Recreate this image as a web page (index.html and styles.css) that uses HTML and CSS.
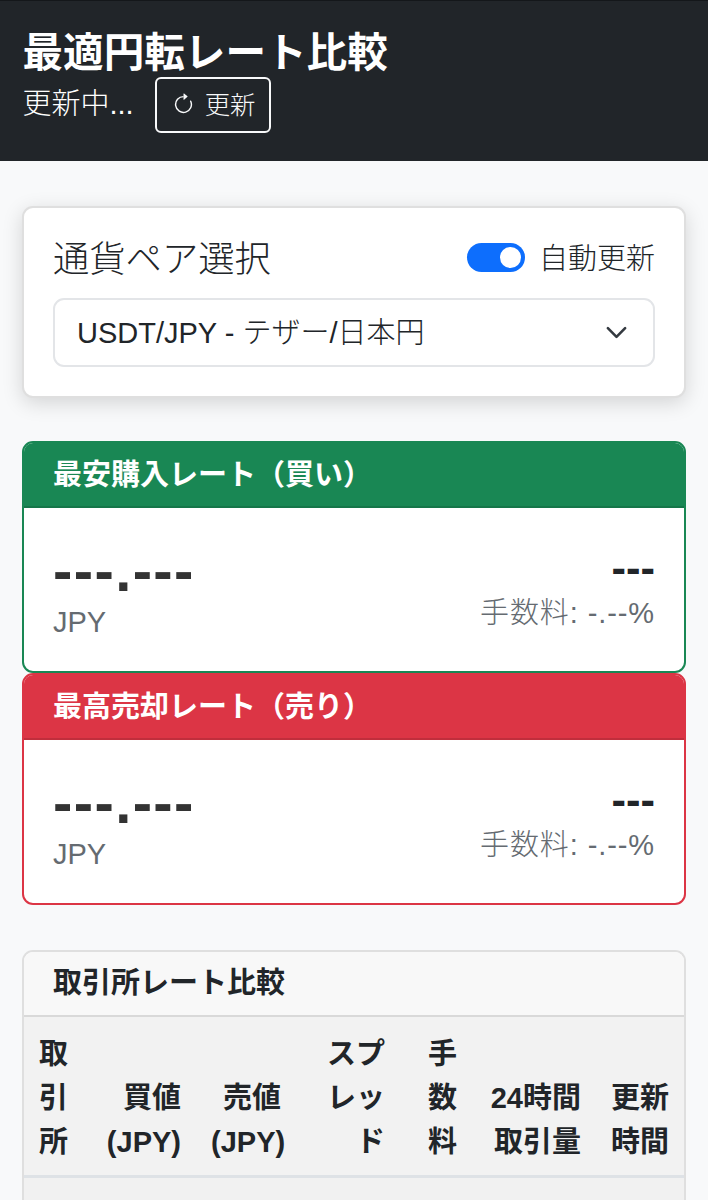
FILE: index.html
```html
<!DOCTYPE html>
<html lang="ja">
<head>
<meta charset="utf-8">
<title>最適円転レート比較</title>
<link rel="stylesheet" href="styles.css">
</head>
<body>
<header class="topbar">
  <h1 class="title">最適円転レート比較</h1>
  <div class="status-row">
    <span class="status">更新中...</span>
    <button class="refresh" type="button">
      <svg class="refresh-icon" viewBox="0 0 16 16" fill="currentColor"><path fill-rule="evenodd" d="M8 3a5 5 0 1 0 4.546 2.914.5.5 0 0 1 .908-.417A6 6 0 1 1 8 2v1z"/><path d="M8 4.466V.534a.25.25 0 0 1 .41-.192l2.36 1.966c.12.1.12.284 0 .384L8.41 4.658A.25.25 0 0 1 8 4.466z"/></svg>
      更新
    </button>
  </div>
</header>
<main class="content">
  <section class="panel select-panel">
    <div class="panel-head">
      <h2 class="panel-title">通貨ペア選択</h2>
      <div class="auto">
        <span class="switch"><span class="knob"></span></span>
        <span class="auto-label">自動更新</span>
      </div>
    </div>
    <div class="select">
      <span class="select-text">USDT/JPY - テザー/日本円</span>
      <svg class="chevron" viewBox="0 0 16 16"><path fill="none" stroke="#343a40" stroke-linecap="round" stroke-linejoin="round" stroke-width="1.8" d="m2 5 6 6 6-6"/></svg>
    </div>
  </section>

  <div class="rates">
    <section class="rate rate-buy">
      <h3 class="rate-head">最安購入レート（買い）</h3>
      <div class="rate-body">
        <div>
          <div class="rate-value">---.---</div>
          <div class="rate-unit">JPY</div>
        </div>
        <div class="rate-side">
          <div class="rate-name">---</div>
          <div class="rate-fee">手数料: -.--%</div>
        </div>
      </div>
    </section>
    <section class="rate rate-sell">
      <h3 class="rate-head">最高売却レート（売り）</h3>
      <div class="rate-body">
        <div>
          <div class="rate-value">---.---</div>
          <div class="rate-unit">JPY</div>
        </div>
        <div class="rate-side">
          <div class="rate-name">---</div>
          <div class="rate-fee">手数料: -.--%</div>
        </div>
      </div>
    </section>
  </div>

  <section class="table-card">
    <h3 class="table-title">取引所レート比較</h3>
    <table class="rates-table">
      <thead>
        <tr>
          <th class="c-name">取引所</th>
          <th class="c-buy">買値 (JPY)</th>
          <th class="c-sell">売値 (JPY)</th>
          <th class="c-spread">スプレッド</th>
          <th class="c-fee">手数料</th>
          <th class="c-vol">24時間取引量</th>
          <th class="c-time">更新時間</th>
        </tr>
      </thead>
      <tbody>
        <tr><td colspan="7" class="empty"></td></tr>
      </tbody>
    </table>
  </section>
</main>
</body>
</html>
```

FILE: styles.css
```css
* { box-sizing: border-box; }
html, body { margin: 0; }
body {
  background: #f8f9fa;
  color: #212529;
  font-family: "Liberation Sans", "Noto Sans CJK JP", sans-serif;
  font-size: 29px;
  line-height: 1.5;
}
.topbar {
  background: #212529;
  color: #fff;
  height: 161px;
  padding: 28px 22.5px 0;
  border-top: 1px solid #14171a;
}
.title {
  margin: 0;
  font-size: 40.6px;
  font-weight: 700;
  line-height: 1.2;
}
.status-row { display: flex; align-items: center; gap: 21px; margin-top: -1px; }
.status { font-size: 29px; font-weight: 300; }
.refresh {
  display: inline-flex;
  align-items: center;
  gap: 10px;
  height: 56px;
  padding: 0 14px 0 15px;
  border: 2px solid #f8f9fa;
  border-radius: 6px;
  background: transparent;
  color: #f8f9fa;
  font: inherit;
  font-size: 25.4px;
  font-weight: 300;
}
.refresh-icon { width: 23px; height: 23px; }
.content { padding: 45px 22px 0; }
.panel {
  background: #fff;
  border: 2px solid rgba(0,0,0,.125);
  border-radius: 11px;
  box-shadow: 0 5px 20px rgba(0,0,0,.15);
  height: 192px;
  padding: 30px 29px 0;
}
.panel-head { display: flex; justify-content: space-between; align-items: center; margin-bottom: 16px; }
.panel-title { margin: 0; font-size: 36.3px; font-weight: 300; line-height: 1.2; }
.auto { display: flex; align-items: center; gap: 14px; }
.switch {
  display: flex;
  align-items: center;
  justify-content: flex-end;
  width: 58px;
  height: 29px;
  margin-bottom: 4px;
  padding: 0 4px;
  border-radius: 15px;
  background: #0d6efd;
}
.knob { width: 21px; height: 21px; border-radius: 50%; background: #fff; }
.auto-label { font-weight: 300; }
.select {
  display: flex;
  justify-content: space-between;
  align-items: center;
  height: 69px;
  padding: 0 25px 0 22px;
  background: #fff;
  border: 2px solid #e3e5e8;
  border-radius: 11px;
  font-weight: 300;
}
.select-text { padding-top: 4px; }
.chevron { width: 23px; height: 23px; }
.rates { margin-top: 43px; }
.rate {
  background: #fff;
  border: 2px solid;
  border-radius: 11px;
  overflow: hidden;
  height: 232px;
}
.rate-buy { border-color: #198754; }
.rate-sell { border-color: #dc3545; }
.rate-head {
  margin: 0;
  height: 65px;
  padding: 12px 29px 0;
  color: #fff;
  font-size: 29px;
  font-weight: 700;
  line-height: 1.4;
  border-bottom: 2px solid rgba(0,0,0,.125);
}
.rate-buy .rate-head { background: #198754; }
.rate-sell .rate-head { background: #dc3545; }
.rate-body { display: flex; justify-content: space-between; align-items: center; padding: 33px 29px 0; }
.rate-value { font-size: 58px; font-weight: 700; line-height: 60px; letter-spacing: 1.4px; color: #333; }
.rate-unit { font-size: 29px; color: #656b71; line-height: 42px; }
.rate-side { text-align: right; }
.rate-name { font-size: 43.5px; font-weight: 700; line-height: 42px; }
.rate-fee { font-size: 29px; color: #656b71; font-weight: 300; line-height: 48px; letter-spacing: .9px; }
.table-card {
  margin-top: 45px;
  background: #fff;
  border: 2px solid rgba(0,0,0,.125);
  border-radius: 11px 11px 0 0;
  overflow: hidden;
}
.table-title {
  margin: 0;
  height: 65px;
  padding: 10px 29px 0;
  background: #f8f8f8;
  border-bottom: 2px solid rgba(0,0,0,.125);
  font-size: 29px;
  font-weight: 700;
}
.rates-table { width: 100%; border-collapse: collapse; table-layout: fixed; }
.rates-table th {
  background: #f2f2f2;
  padding: 15px 15px 11px;
  font-size: 29px;
  line-height: 44px;
  font-weight: 700;
  text-align: right;
  vertical-align: bottom;
  border-bottom: 3px solid #dee2e6;
}
.rates-table .c-name { text-align: left; width: 60px; }
.rates-table .c-buy { width: 112px; }
.rates-table .c-sell { width: 100px; }
.rates-table .c-spread { width: 104px; }
.rates-table .c-fee { width: 72px; }
.rates-table .c-vol { width: 124px; }
.rates-table .c-time { width: 88px; }
.empty { height: 60px; background: #f1f1f1; }
```
